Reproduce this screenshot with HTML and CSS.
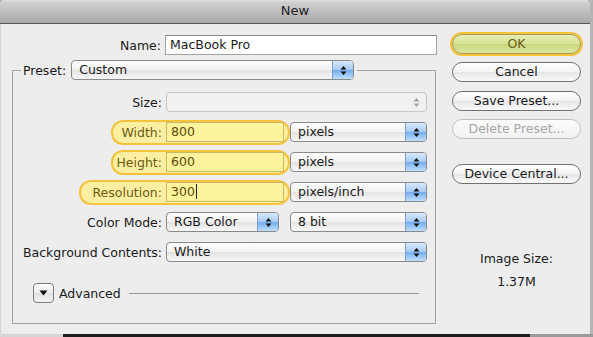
FILE: index.html
```html
<html>
<head>
	<link rel="stylesheet" href="styles.css">
</head>
<body>
	<div class="window">
		<div class="titlebar">New</div>
		<div class="dialog">
			<div class="main">
				<div class="namerow">
					<span class="lab">Name:</span>
					<div class="field">MacBook Pro</div>
				</div>
				<fieldset class="preset">
					<legend>
						<span class="legend-lab">Preset:</span>
						<div class="popup preset-pop">
							<span class="val">Custom</span>
							<span class="step"><svg width="7" height="11" viewBox="0 0 7 11"><polygon points="3.5,1 0.5,4.5 6.5,4.5"/><polygon points="0.5,6.5 6.5,6.5 3.5,10"/></svg></span>
						</div>
					</legend>
					<div class="grid">
						<span class="lab">Size:</span>
						<div class="popup off span2">
							<span class="val"></span>
							<span class="step"><svg width="7" height="11" viewBox="0 0 7 11"><polygon points="3.5,1 0.5,4.5 6.5,4.5"/><polygon points="0.5,6.5 6.5,6.5 3.5,10"/></svg></span>
						</div>

						<span class="lab hl"><span class="hl-l short">Width:</span></span>
						<span class="hl-r"><span class="field hot">800</span></span>
						<div class="popup">
							<span class="val">pixels</span>
							<span class="step"><svg width="7" height="11" viewBox="0 0 7 11"><polygon points="3.5,1 0.5,4.5 6.5,4.5"/><polygon points="0.5,6.5 6.5,6.5 3.5,10"/></svg></span>
						</div>

						<span class="lab hl"><span class="hl-l short">Height:</span></span>
						<span class="hl-r"><span class="field hot">600</span></span>
						<div class="popup">
							<span class="val">pixels</span>
							<span class="step"><svg width="7" height="11" viewBox="0 0 7 11"><polygon points="3.5,1 0.5,4.5 6.5,4.5"/><polygon points="0.5,6.5 6.5,6.5 3.5,10"/></svg></span>
						</div>

						<span class="lab hl"><span class="hl-l long">Resolution:</span></span>
						<span class="hl-r"><span class="field hot">300<span class="caret"></span></span></span>
						<div class="popup">
							<span class="val">pixels/inch</span>
							<span class="step"><svg width="7" height="11" viewBox="0 0 7 11"><polygon points="3.5,1 0.5,4.5 6.5,4.5"/><polygon points="0.5,6.5 6.5,6.5 3.5,10"/></svg></span>
						</div>

						<span class="lab">Color Mode:</span>
						<div class="popup rgb">
							<span class="val">RGB Color</span>
							<span class="step"><svg width="7" height="11" viewBox="0 0 7 11"><polygon points="3.5,1 0.5,4.5 6.5,4.5"/><polygon points="0.5,6.5 6.5,6.5 3.5,10"/></svg></span>
						</div>
						<div class="popup">
							<span class="val">8 bit</span>
							<span class="step"><svg width="7" height="11" viewBox="0 0 7 11"><polygon points="3.5,1 0.5,4.5 6.5,4.5"/><polygon points="0.5,6.5 6.5,6.5 3.5,10"/></svg></span>
						</div>

						<span class="lab">Background Contents:</span>
						<div class="popup span2">
							<span class="val">White</span>
							<span class="step"><svg width="7" height="11" viewBox="0 0 7 11"><polygon points="3.5,1 0.5,4.5 6.5,4.5"/><polygon points="0.5,6.5 6.5,6.5 3.5,10"/></svg></span>
						</div>
					</div>
					<div class="advanced">
						<span class="disclose"><svg width="9" height="6" viewBox="0 0 9 6"><polygon points="0.5,0.5 8.5,0.5 4.5,5.5"/></svg></span>
						<span class="adv-lab">Advanced</span>
						<span class="rule"></span>
					</div>
				</fieldset>
			</div>
			<div class="side">
				<div class="btn ok">OK</div>
				<div class="btn cancel">Cancel</div>
				<div class="btn save">Save Preset...</div>
				<div class="btn off del">Delete Preset...</div>
				<div class="btn device">Device Central...</div>
				<div class="imgsize">
					<div>Image Size:</div>
					<div class="imgsize-val">1.37M</div>
				</div>
			</div>
		</div>
	</div>
	<div class="below"></div>
</body>
</html>
```

FILE: styles.css
```css
body {
	margin: 0;
	background: #b4b4b4;
	font-family: 'DejaVu Sans', sans-serif;
	font-size: 12.5px;
	color: #1a1a1a;
}

.window {
	width: 590px;
	height: 334px;
	background: #ededed;
	border-radius: 5px 5px 0 0;
	overflow: hidden;
	box-shadow: inset 1px 0 0 #d4d4d4;
}

.titlebar {
	height: 23px;
	line-height: 22px;
	text-align: center;
	font-size: 13px;
	color: #222;
	background: linear-gradient(#e2e2e2, #cfcfcf 10%, #a9a9a9);
	border-bottom: 1px solid #555;
}

.dialog {
	display: flex;
}

.main {
	width: 452px;
	padding-top: 11px;
}

.namerow {
	display: grid;
	grid-template-columns: 153px 272px;
	margin-left: 12px;
	align-items: center;
}

.lab {
	display: flex;
	justify-content: flex-end;
	padding-right: 4px;
	white-space: nowrap;
}

.field {
	box-sizing: border-box;
	height: 20px;
	line-height: 18px;
	padding-left: 4px;
	background: #fff;
	border: 1px solid #a4a4a4;
	border-top-color: #888;
}

/* fieldset with the preset popup sitting on its top border */
.preset {
	box-sizing: border-box;
	width: 424px;
	margin: 5px 0 0 12px;
	padding: 0;
	border: 1px solid #a2a2a2;
	min-inline-size: 0;
}

.preset legend {
	display: flex;
	align-items: center;
	margin-left: 8px;
	padding: 0 3px 0 2px;
}

.legend-lab {
	margin-right: 5px;
}

.preset-pop {
	width: 283px;
}

.grid {
	display: grid;
	grid-template-columns: 153px 124px 137px;
	grid-auto-rows: 30px;
	align-items: center;
	margin-top: 7px;
}

.span2 {
	grid-column: span 2;
}

/* aqua style popups */
.popup {
	box-sizing: border-box;
	height: 20px;
	display: flex;
	border: 1px solid #8a8a8a;
	border-radius: 4px;
	overflow: hidden;
	background: linear-gradient(#fdfdfd, #f2f2f2 50%, #e3e3e3 51%, #f7f7f7);
}

.popup .val {
	flex: 1;
	padding-left: 7px;
	line-height: 18px;
	white-space: nowrap;
}

.popup .step {
	width: 20px;
	display: flex;
	align-items: center;
	justify-content: center;
	border-left: 1px solid #7c9ccc;
	background: linear-gradient(#d8e9fc, #a6cbf5 50%, #74acee 51%, #bfe0fd);
}

.popup svg {
	fill: #111;
}

.popup.off {
	border-color: #c6c6c6;
	background: #f1f1f1;
}

.popup.off .step {
	background: none;
	border-left: none;
}

.popup.off svg {
	fill: #a0a0a0;
}

.popup.rgb {
	width: 113px;
}

/* yellow focus highlight around label + field */
.lab.hl {
	padding-right: 0;
}

.hl-l,
.hl-r {
	box-sizing: border-box;
	height: 25px;
	display: flex;
	align-items: center;
	background: #fcefa2;
	border: 2px solid #f4c23c;
	color: #6d5a12;
}

.hl-l {
	border-right: none;
	border-radius: 12px 0 0 12px;
	padding: 0 4px 0 10px;
}

.hl-l.short {
	width: 55px;
	justify-content: flex-end;
	padding-left: 0;
}

.hl-l.long {
	padding-left: 11px;
}

.hl-r {
	border-left: none;
	border-radius: 0 12px 12px 0;
	padding-right: 3px;
	width: 124px;
}

.field.hot {
	width: 118px;
	background: #fdf29e;
	border-color: #cbb862;
	color: #5c4b05;
}

.caret {
	display: inline-block;
	width: 1px;
	height: 15px;
	margin-left: 1px;
	vertical-align: -3px;
	background: #222;
}

.advanced {
	display: flex;
	align-items: center;
	height: 26px;
	margin: 13px 0 17px 20px;
}

.disclose {
	box-sizing: border-box;
	width: 21px;
	height: 20px;
	display: flex;
	align-items: center;
	justify-content: center;
	border: 1px solid #7a7a7a;
	border-radius: 4px;
	background: linear-gradient(#fdfdfd, #ececec 50%, #e0e0e0 51%, #f4f4f4);
}

.disclose svg {
	fill: #111;
}

.adv-lab {
	margin-left: 5px;
}

.rule {
	width: 290px;
	height: 1px;
	margin-left: 8px;
	background: #9a9a9a;
}

.side {
	width: 129px;
	padding-top: 10px;
	display: flex;
	flex-direction: column;
}

.btn {
	box-sizing: border-box;
	height: 20px;
	line-height: 18px;
	text-align: center;
	border: 1px solid #6f6f6f;
	border-radius: 10px;
	background: linear-gradient(#ffffff, #f3f3f3 50%, #e6e6e6 51%, #fafafa);
	white-space: nowrap;
}

.btn.ok {
	border-color: #a89a4c;
	color: #6b5c14;
	background: linear-gradient(#e6eeb6, #d6e294 50%, #c8d77c 51%, #dce8a2);
	box-shadow: 0 0 0 2px #f6c237;
}

.btn.cancel {
	margin-top: 8px;
}

.btn.save {
	margin-top: 9px;
}

.btn.del {
	margin-top: 8px;
}

.btn.off {
	border-color: #c0c0c0;
	color: #a6a6a6;
	background: linear-gradient(#fbfbfb, #f2f2f2);
}

.btn.device {
	margin-top: 25px;
}

.imgsize {
	margin-top: 67px;
	text-align: center;
	line-height: 16px;
}

.imgsize-val {
	margin-top: 7px;
}

.below {
	width: 593px;
	height: 3px;
	background: linear-gradient(90deg, #d6d6d6 0, #d6d6d6 63px, #1e1e1e 63px, #1e1e1e 530px, #9a9a9a 530px);
}
```
